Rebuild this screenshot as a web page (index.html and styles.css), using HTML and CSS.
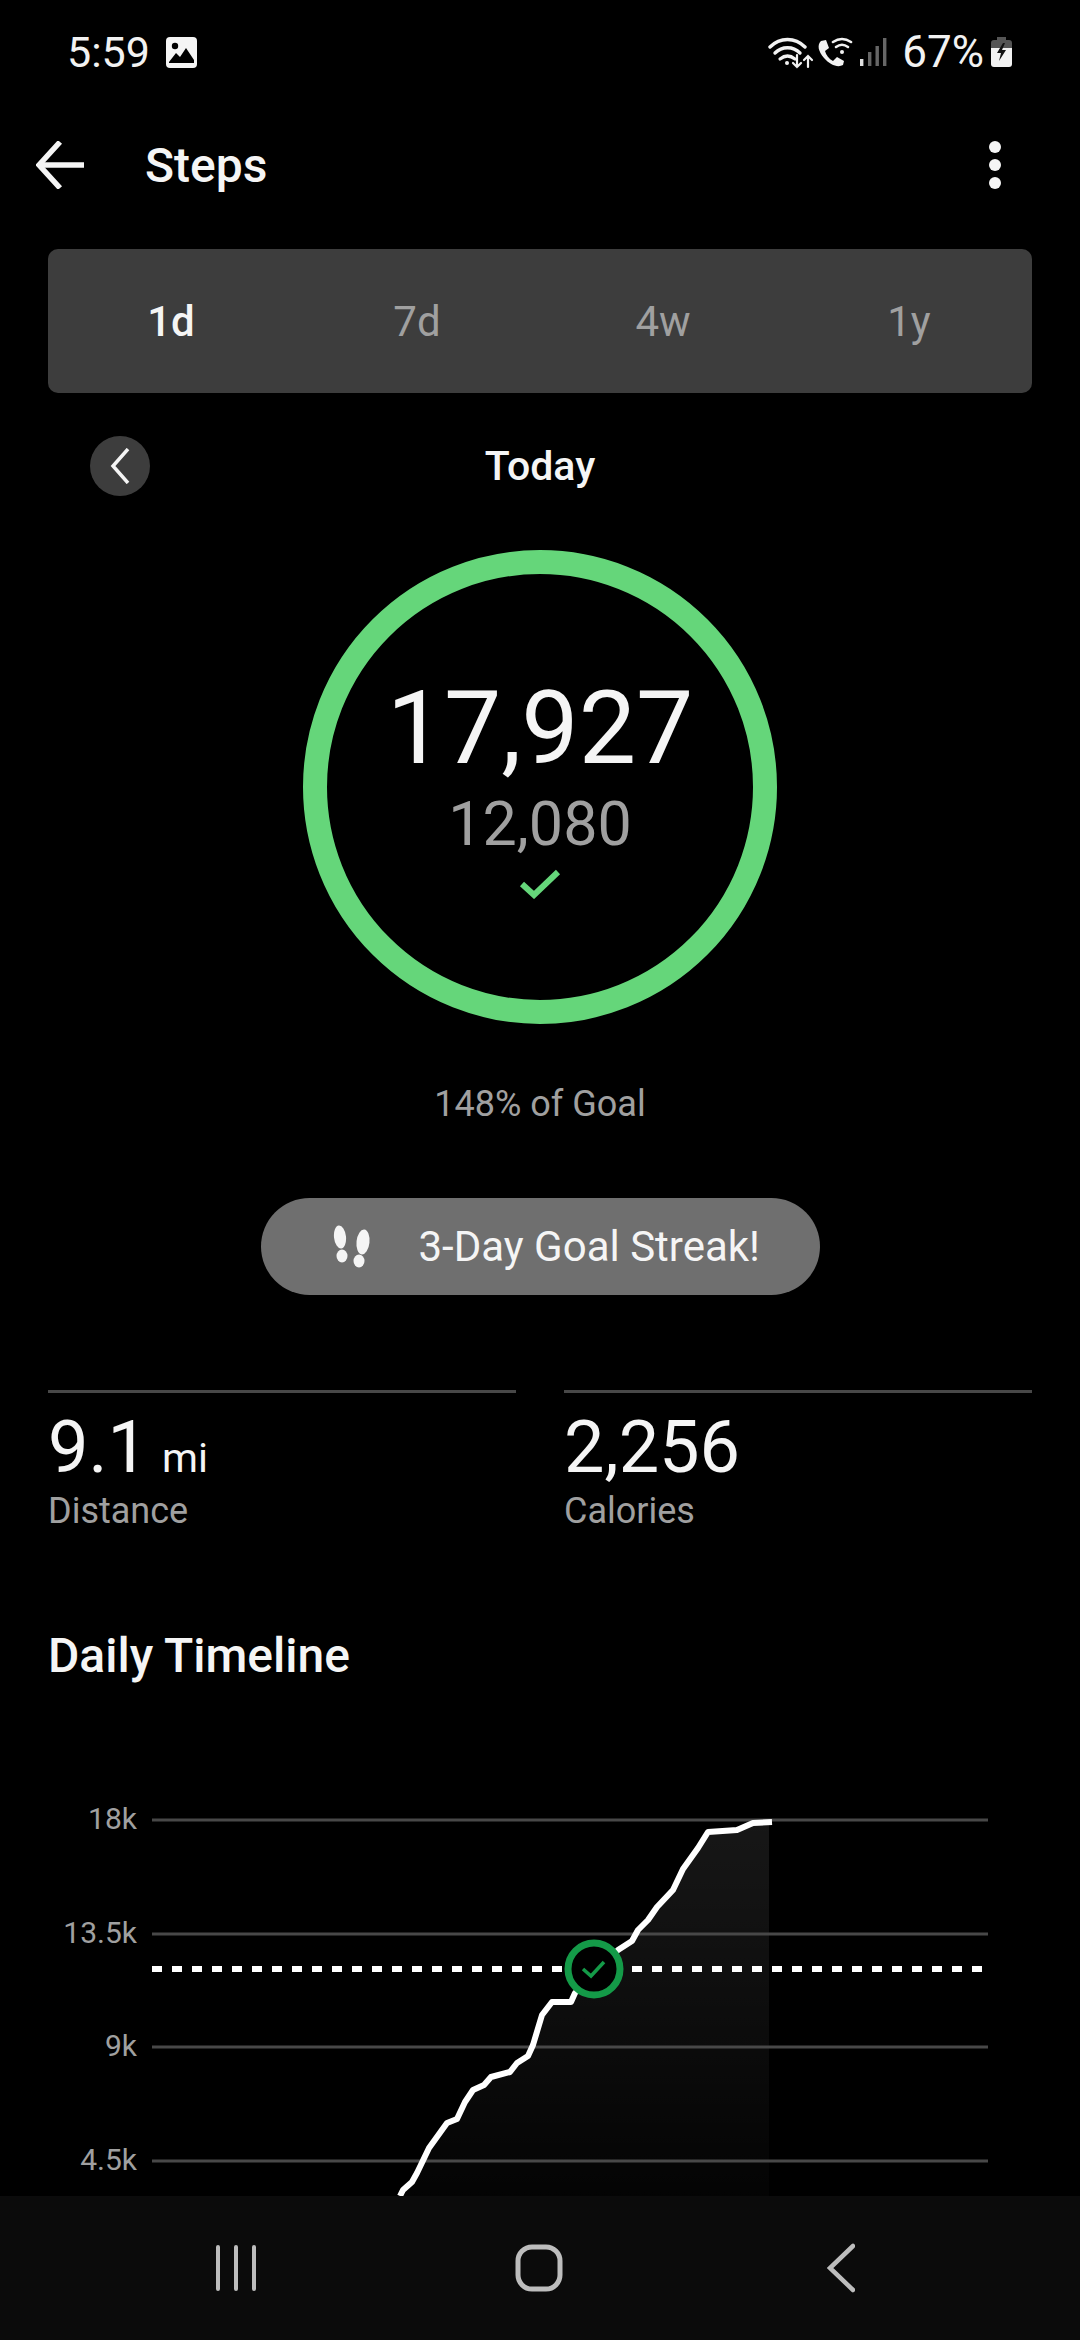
FILE: index.html
```html
<!DOCTYPE html>
<html lang="en">
<head>
    <meta charset="UTF-8">
    <meta name="viewport" content="width=device-width, initial-scale=1.0">
    <title>Steps</title>
    <link rel="stylesheet" href="styles.css">
</head>
<body>
    <div class="screen">
        <div class="status-bar">
            <div class="status-left">
                <span class="status-text">5:59</span>
                <svg class="icon-gallery" width="31" height="31" viewBox="0 0 31 31">
                    <rect width="31" height="31" rx="4" fill="#f5f5f5"/>
                    <circle cx="9" cy="9" r="3.2" fill="#000"/>
                    <path d="M3 25 L10 16 L14 20 L20 11 L28 23 V26 H3 Z" fill="#000"/>
                </svg>
            </div>
            <div class="status-right">
                <svg width="86" height="34" viewBox="0 0 86 34" fill="none" stroke="#f2f2f2" stroke-linecap="round">
                    <path d="M2 12 C12 2 27 2 37 12" stroke-width="3.4"/>
                    <path d="M7 18 C14 11 25 11 32 18" stroke-width="3.4"/>
                    <path d="M12 24 C17 20 22 20 27 24" stroke-width="3.2"/>
                    <circle cx="19" cy="28" r="2" fill="#f2f2f2" stroke="none"/>
                    <path d="M29 20 V32 M25 28 L29 32 L33 28" stroke-width="2.2"/>
                    <path d="M40 32 V21 M36 25 L40 21 L44 25" stroke-width="2.2"/>
                    <path d="M53 6 L58 5 L61 13 L57 16 C58 20 61 24 65 26 L69 22 L76 26 L75 30 C70 33 62 30 56 23 C50 16 49 10 53 6 Z" fill="#f2f2f2" stroke="none"/>
                    <path d="M65 7 C71 3 77 3 83 7" stroke-width="2.6"/>
                    <path d="M68 12 C72 9 76 9 80 12" stroke-width="2.6"/>
                    <circle cx="74" cy="17" r="2" fill="#f2f2f2" stroke="none"/>
                </svg>
                <svg class="icon-signal" width="28" height="30" viewBox="0 0 28 30">
                    <rect x="0" y="22" width="3.4" height="7" fill="#e0e0e0"/>
                    <rect x="8" y="15" width="3.4" height="14" fill="#666"/>
                    <rect x="15.5" y="9" width="3.4" height="20" fill="#666"/>
                    <rect x="23" y="1" width="3.4" height="28" fill="#666"/>
                </svg>
                <span class="status-text pct">67%</span>
                <svg class="icon-battery" width="21" height="30" viewBox="0 0 21 30">
                    <path d="M6 0 H15 V3 H18 Q21 3 21 6 V11 H0 V6 Q0 3 3 3 H6 Z" fill="#555"/>
                    <path d="M0 11 H21 V27 Q21 30 18 30 H3 Q0 30 0 27 Z" fill="#f2f2f2"/>
                    <path d="M12 6 L6 16 H10 L8 24 L15 13 H11 L14 6 Z" fill="#111"/>
                </svg>
            </div>
        </div>

        <div class="app-bar">
            <svg class="back-arrow" width="48" height="48" viewBox="0 0 48 48" fill="none" stroke="#f5f5f5" stroke-width="5.5">
                <path d="M48 24 H3"/>
                <path d="M24 1 L3 24 L24 47"/>
            </svg>
            <span class="app-title">Steps</span>
            <div class="more">
                <span class="dot"></span>
                <span class="dot"></span>
                <span class="dot"></span>
            </div>
        </div>

        <div class="tabs">
            <div class="tab active">1d</div>
            <div class="tab">7d</div>
            <div class="tab">4w</div>
            <div class="tab">1y</div>
        </div>

        <div class="date-row">
            <div class="prev-btn">
                <svg width="20" height="36" viewBox="0 0 20 36" fill="none" stroke="#f5f5f5" stroke-width="3.5">
                    <path d="M18 1 L3 18 L18 35"/>
                </svg>
            </div>
            <div class="date-label">Today</div>
        </div>

        <div class="ring">
            <div class="ring-value">17,927</div>
            <div class="ring-goal">12,080</div>
            <svg class="ring-check" width="42" height="30" viewBox="0 0 42 30" fill="none" stroke="#65d67a" stroke-width="6">
                <path d="M3 15 L15 26 L39 3"/>
            </svg>
        </div>

        <div class="goal-text">148% of Goal</div>

        <div class="streak">
            <svg width="38" height="44" viewBox="0 0 38 44" fill="#f5f5f5">
                <ellipse cx="7" cy="12" rx="6" ry="11.5" transform="rotate(-6 7 12)"/>
                <ellipse cx="9" cy="31" rx="5.5" ry="6.5"/>
                <ellipse cx="30" cy="17" rx="6.5" ry="12.5" transform="rotate(6 30 17)"/>
                <ellipse cx="26" cy="36" rx="5.5" ry="6.5"/>
            </svg>
            <span>3-Day Goal Streak!</span>
        </div>

        <div class="stats">
            <div class="stat">
                <div class="stat-value">9.1<span class="stat-unit">mi</span></div>
                <div class="stat-label">Distance</div>
            </div>
            <div class="stat">
                <div class="stat-value">2,256</div>
                <div class="stat-label">Calories</div>
            </div>
        </div>

        <h2 class="section-title">Daily Timeline</h2>

        <svg class="chart" width="1080" height="440" viewBox="0 1780 1080 440">
            <defs>
                <linearGradient id="areaFill" x1="0" y1="0" x2="0" y2="1">
                    <stop offset="0" stop-color="#fff" stop-opacity="0.09"/>
                    <stop offset="1" stop-color="#fff" stop-opacity="0.01"/>
                </linearGradient>
            </defs>
            <path d="M400 2196 L403 2190 L412 2182 L417 2173 L429 2148 L447 2123 L457 2119 L465 2102 L473 2090 L484 2085 L491 2077 L510 2072 L517 2063 L528 2056 L533 2045 L542 2015 L552 2002 L571 2002 L575 1993 L618 1950 L632 1941 L638 1930 L648 1920 L657 1907 L673 1890 L683 1869 L698 1848 L708 1832 L737 1830 L753 1823 L769 1822 V2220 H400 Z" fill="url(#areaFill)"/>
            <g stroke="#484848" stroke-width="3">
                <path d="M152 1820 H988"/>
                <path d="M152 1934 H988"/>
                <path d="M152 2047 H988"/>
                <path d="M152 2161 H988"/>
            </g>
            <g class="axis-label">
                <text x="137" y="1829">18k</text>
                <text x="137" y="1943">13.5k</text>
                <text x="137" y="2056">9k</text>
                <text x="137" y="2170">4.5k</text>
            </g>
            <path d="M152 1969 H984" stroke="#fff" stroke-width="6" stroke-dasharray="10 10"/>
            <path d="M400 2196 L403 2190 L412 2182 L417 2173 L429 2148 L447 2123 L457 2119 L465 2102 L473 2090 L484 2085 L491 2077 L510 2072 L517 2063 L528 2056 L533 2045 L542 2015 L552 2002 L571 2002 L575 1993 L618 1950 L632 1941 L638 1930 L648 1920 L657 1907 L673 1890 L683 1869 L698 1848 L708 1832 L737 1830 L753 1823 L772 1822" fill="none" stroke="#fff" stroke-width="6" stroke-linejoin="round"/>
            <circle cx="594" cy="1969" r="26" fill="#000" stroke="#149a48" stroke-width="7"/>
            <path d="M583 1969 L591 1976 L604 1962" fill="none" stroke="#149a48" stroke-width="3.5"/>
        </svg>

        <div class="nav-bar">
            <svg width="40" height="46" viewBox="0 0 40 46" stroke="#bdbdbd" stroke-width="4" stroke-linecap="round">
                <path d="M2 2 V44 M20 2 V44 M38 2 V44"/>
            </svg>
            <svg class="nav-home" width="48" height="48" viewBox="0 0 48 48" fill="none" stroke="#bdbdbd" stroke-width="5">
                <rect x="3" y="3" width="42" height="42" rx="14"/>
            </svg>
            <svg width="28" height="50" viewBox="0 0 28 50" fill="none" stroke="#bdbdbd" stroke-width="4.5" stroke-linecap="round">
                <path d="M26 3 L3 25 L26 47"/>
            </svg>
        </div>
    </div>
</body>
</html>
```

FILE: styles.css
```css
* {
    box-sizing: border-box;
}
body {
    margin: 0;
    background-color: #000;
    font-family: Roboto, "Liberation Sans", sans-serif;
    color: #f5f5f5;
}
.screen {
    position: relative;
    width: 1080px;
    height: 2340px;
    overflow: hidden;
    background-color: #000;
}

/* status bar */
.status-bar {
    display: flex;
    justify-content: space-between;
    align-items: center;
    height: 104px;
    padding: 0 68px 0 67px;
}
.status-left, .status-right {
    display: flex;
    align-items: center;
}
.status-text {
    font-size: 43px;
    line-height: 44px;
    color: #f2f2f2;
}
.icon-gallery {
    margin-left: 16px;
}
.icon-signal {
    margin-left: 6px;
}
.pct {
    margin-left: 14px;
    font-size: 44px;
}
.icon-battery {
    margin-left: 7px;
}

/* app bar */
.app-bar {
    display: flex;
    align-items: center;
    height: 122px;
    padding: 0 79px 0 36px;
}
.app-title {
    margin-left: 61px;
    flex: 1;
    font-size: 48px;
    font-weight: 500;
}
.more {
    display: flex;
    flex-direction: column;
    gap: 6px;
}
.dot {
    width: 12px;
    height: 12px;
    border-radius: 50%;
    background-color: #f5f5f5;
}

/* range tabs */
.tabs {
    display: grid;
    grid-template-columns: repeat(4, 1fr);
    align-items: center;
    height: 144px;
    margin: 23px 48px 0;
    background-color: #3d3d3d;
    border-radius: 10px;
}
.tab {
    text-align: center;
    font-size: 42px;
    color: #a0a0a0;
}
.tab.active {
    font-weight: 500;
    color: #f5f5f5;
}

/* date row */
.date-row {
    position: relative;
    display: flex;
    align-items: center;
    justify-content: center;
    height: 60px;
    margin-top: 43px;
}
.prev-btn {
    position: absolute;
    left: 90px;
    top: 0;
    display: flex;
    align-items: center;
    justify-content: center;
    width: 60px;
    height: 60px;
    border-radius: 50%;
    background-color: #3d3d3d;
}
.date-label {
    font-size: 41px;
    font-weight: 500;
}

/* ring */
.ring {
    display: flex;
    flex-direction: column;
    align-items: center;
    width: 474px;
    height: 474px;
    margin: 54px auto 0;
    padding-top: 94px;
    border: 24px solid #65d67a;
    border-radius: 50%;
}
.ring-value {
    font-size: 102px;
    line-height: 120px;
}
.ring-goal {
    margin-top: 1px;
    font-size: 61px;
    line-height: 70px;
    color: #a0a0a0;
}
.ring-check {
    margin-top: 10px;
}
.goal-text {
    margin-top: 60px;
    text-align: center;
    font-size: 36px;
    line-height: 40px;
    color: #a0a0a0;
}
.streak {
    display: flex;
    align-items: center;
    gap: 48px;
    width: 559px;
    height: 97px;
    margin: 74px auto 0;
    padding-left: 72px;
    background-color: #6f6f6f;
    border-radius: 49px;
    font-size: 42px;
}

/* distance + calories */
.stats {
    display: grid;
    grid-template-columns: 1fr 1fr;
    gap: 48px;
    margin: 95px 48px 0;
}
.stat {
    padding-top: 15px;
    border-top: 3px solid #484848;
}
.stat-value {
    height: 80px;
    font-size: 72px;
    line-height: 80px;
}
.stat-unit {
    margin-left: 14px;
    font-size: 41px;
    line-height: 1;
}
.stat-label {
    margin-top: 2px;
    font-size: 36px;
    line-height: 42px;
    color: #a0a0a0;
}
.section-title {
    margin: 96px 48px 0;
    font-size: 48px;
    line-height: 56px;
    font-weight: 500;
}

/* chart */
.chart {
    display: block;
    margin-top: 96px;
}
.axis-label text {
    font-size: 30px;
    fill: #a0a0a0;
    text-anchor: end;
}

/* android nav */
.nav-bar {
    position: absolute;
    left: 0;
    right: 0;
    bottom: 0;
    display: flex;
    justify-content: space-between;
    align-items: center;
    height: 144px;
    padding: 0 225px 0 216px;
    background-color: #0b0b0b;
}
.nav-home {
    margin-right: 6px;
}
```
